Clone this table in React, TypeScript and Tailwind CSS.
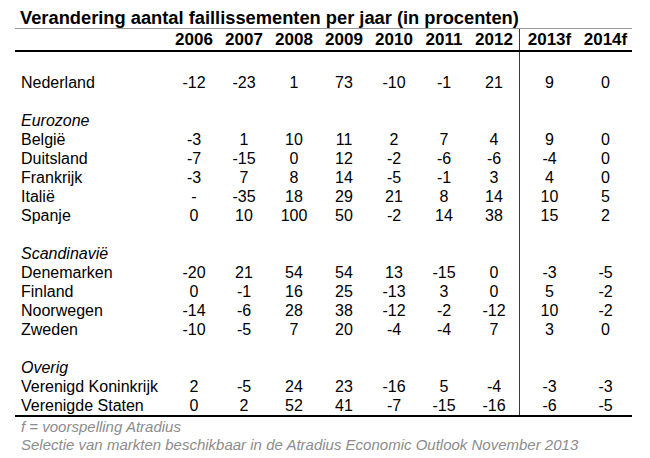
import React from "react";

type Row =
  | { kind: "blank" }
  | { kind: "cat"; label: string }
  | { kind: "data"; label: string; values: string[] };

const rows: Row[] = [
  { kind: "data", label: "Nederland", values: ["-12", "-23", "1", "73", "-10", "-1", "21", "9", "0"] },
  { kind: "blank" },
  { kind: "cat", label: "Eurozone" },
  { kind: "data", label: "België", values: ["-3", "1", "10", "11", "2", "7", "4", "9", "0"] },
  { kind: "data", label: "Duitsland", values: ["-7", "-15", "0", "12", "-2", "-6", "-6", "-4", "0"] },
  { kind: "data", label: "Frankrijk", values: ["-3", "7", "8", "14", "-5", "-1", "3", "4", "0"] },
  { kind: "data", label: "Italië", values: ["-", "-35", "18", "29", "21", "8", "14", "10", "5"] },
  { kind: "data", label: "Spanje", values: ["0", "10", "100", "50", "-2", "14", "38", "15", "2"] },
  { kind: "blank" },
  { kind: "cat", label: "Scandinavië" },
  { kind: "data", label: "Denemarken", values: ["-20", "21", "54", "54", "13", "-15", "0", "-3", "-5"] },
  { kind: "data", label: "Finland", values: ["0", "-1", "16", "25", "-13", "3", "0", "5", "-2"] },
  { kind: "data", label: "Noorwegen", values: ["-14", "-6", "28", "38", "-12", "-2", "-12", "10", "-2"] },
  { kind: "data", label: "Zweden", values: ["-10", "-5", "7", "20", "-4", "-4", "7", "3", "0"] },
  { kind: "blank" },
  { kind: "cat", label: "Overig" },
  { kind: "data", label: "Verenigd Koninkrijk", values: ["2", "-5", "24", "23", "-16", "5", "-4", "-3", "-3"] },
  { kind: "data", label: "Verenigde Staten", values: ["0", "2", "52", "41", "-7", "-15", "-16", "-6", "-5"] },
];

const years = ["2006", "2007", "2008", "2009", "2010", "2011", "2012"];

function Cells({ values }: { values: string[] }) {
  return (
    <>
      {values.slice(0, 7).map((v, i) => (
        <div key={i} className="w-[50px] text-center">
          {v}
        </div>
      ))}
      <div className="w-[60px] text-center border-l border-[#3a3a3a]">{values[7] ?? ""}</div>
      <div className="w-[53px] text-center">{values[8] ?? ""}</div>
    </>
  );
}

function EmptyRow({ h }: { h: string }) {
  return (
    <div className={"flex " + h}>
      <div className="w-[504px]" />
      <div className="w-[60px] border-l border-[#3a3a3a]" />
      <div className="w-[53px]" />
    </div>
  );
}

export default function App() {
  return (
    <div
      className="w-[650px] h-[458px] bg-white text-black overflow-hidden"
      style={{ fontFamily: '"Liberation Sans", Arial, sans-serif' }}
    >
      <div className="ml-[15px] w-[617px]">
        <div className="pt-[8px] pl-[5px] h-[28px] text-[18.3px] leading-[20px] font-bold whitespace-nowrap">
          Verandering aantal faillissementen per jaar (in procenten)
        </div>
        <div className="h-px bg-[#9a9a9a]" />
        <div className="flex h-[21px] text-[17px] leading-[21px] font-bold">
          <div className="w-[154px]" />
          {years.map((y) => (
            <div key={y} className="w-[50px] text-center">
              {y}
            </div>
          ))}
          <div className="w-[60px] text-center border-l border-[#3a3a3a]">2013f</div>
          <div className="w-[53px] text-center">2014f</div>
        </div>
        <div className="h-[2px] bg-black" />
        <EmptyRow h="h-[21px]" />
        <div className="text-[16px] leading-[19px]">
          {rows.map((r, i) => {
            if (r.kind === "blank") return <EmptyRow key={i} h="h-[19px]" />;
            if (r.kind === "cat")
              return (
                <div key={i} className="flex h-[19px]">
                  <div className="w-[504px] pl-[6px] italic">{r.label}</div>
                  <div className="w-[60px] border-l border-[#3a3a3a]" />
                  <div className="w-[53px]" />
                </div>
              );
            return (
              <div key={i} className="flex h-[19px]">
                <div className="w-[154px] pl-[6px] whitespace-nowrap">{r.label}</div>
                <Cells values={r.values} />
              </div>
            );
          })}
        </div>
        <div className="h-[2px] bg-black" />
        <div className="pl-[6px] pt-[1px] text-[15px] leading-[18px] italic text-[#8c8c8c] whitespace-nowrap">
          <div>f = voorspelling Atradius</div>
          <div>Selectie van markten beschikbaar in de Atradius Economic Outlook November 2013</div>
        </div>
      </div>
    </div>
  );
}
